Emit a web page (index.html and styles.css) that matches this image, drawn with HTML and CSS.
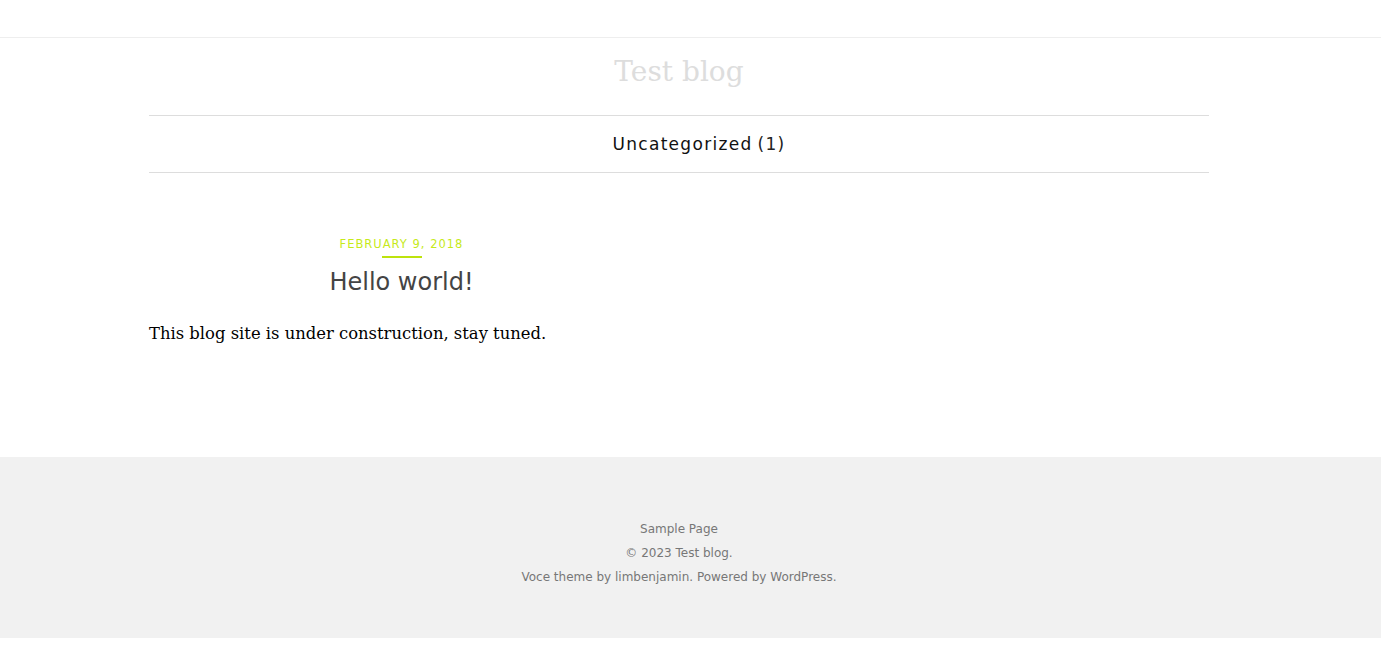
FILE: index.html
```html
<!DOCTYPE html>
<html lang="en">
<head>
<meta charset="utf-8">
<title>Test blog</title>
<link rel="stylesheet" href="styles.css">
</head>
<body>
<div class="topbar"></div>
<header class="site-header">
  <div class="container">
    <h1 class="site-title"><a href="#">Test blog</a></h1>
    <nav class="cat-nav">
      <a href="#">Uncategorized</a> <span class="count">(1)</span>
    </nav>
  </div>
</header>
<main class="container content">
  <div class="posts">
    <article class="post">
      <div class="post-date">February 9, 2018</div>
      <span class="date-bar"></span>
      <h2 class="post-title">Hello world!</h2>
      <p class="post-body">This blog site is under construction, stay tuned.</p>
    </article>
  </div>
</main>
<footer class="site-footer">
  <div class="container footer-inner">
    <p><a href="#">Sample Page</a></p>
    <p>© 2023 Test blog.</p>
    <p>Voce theme by <a href="#">limbenjamin</a>. Powered by <a href="#">WordPress</a>.</p>
  </div>
</footer>
</body>
</html>
```

FILE: styles.css
```css
html, body {
  margin: 0;
  padding: 0;
  background: #fff;
}
body {
  font-family: "DejaVu Sans", "Liberation Sans", sans-serif;
}
a { text-decoration: none; color: inherit; }

.topbar {
  height: 37px;
  border-bottom: 1px solid #eeeeee;
}
.container {
  width: 1060px;
  margin-left: calc((100% - 1083px) / 2);
}
.site-title {
  margin: 0;
  height: 77px;
  padding-bottom: 10px;
  box-sizing: border-box;
  display: flex;
  align-items: center;
  justify-content: center;
  font-family: "DejaVu Serif", "Liberation Serif", serif;
  font-weight: normal;
  font-size: 28px;
  color: #dddddd;
}
.cat-nav {
  border-top: 1px solid #dddddd;
  border-bottom: 1px solid #dddddd;
  height: 56px;
  padding-left: 40px;
  display: flex;
  align-items: center;
  justify-content: center;
  font-size: 17px;
  letter-spacing: 1.3px;
  color: #111;
  gap: 5px;
}
.cat-nav .count { color: #222; }

.content {
  padding-top: 64px;
  height: 220px;
}
.posts {
  width: 505px;
}
.post {
  display: flex;
  flex-direction: column;
}
.post-date {
  text-align: center;
  font-size: 11.5px;
  letter-spacing: 1px;
  text-transform: uppercase;
  color: #c6ea1a;
  line-height: 14px;
}
.date-bar {
  align-self: center;
  width: 40px;
  height: 2px;
  background: #bde30d;
  margin-top: 5px;
}
.post-title {
  margin: 9px 0 0;
  text-align: center;
  font-weight: normal;
  font-size: 24px;
  color: #444;
  line-height: 30px;
}
.post-body {
  margin: 25px 0 0;
  font-family: "DejaVu Serif", "Liberation Serif", serif;
  font-size: 16.4px;
  color: #000;
  white-space: nowrap;
  line-height: 24px;
}

.site-footer {
  background: #f1f1f1;
  height: 181px;
  padding-top: 60px;
  box-sizing: border-box;
  font-size: 12px;
  color: #777;
}
.footer-inner {
  text-align: center;
}
.site-footer p {
  margin: 0;
  line-height: 24px;
}
```
